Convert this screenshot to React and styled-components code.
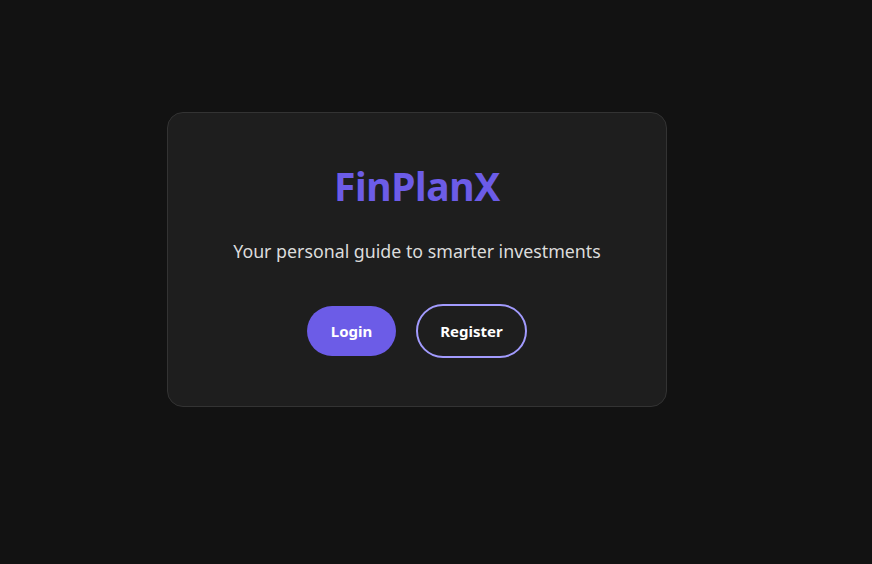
import React from "react";
import styled, { createGlobalStyle } from "styled-components";

const Global = createGlobalStyle`
  html, body { margin: 0; padding: 0; background: #121212; }
  body { font-family: "Noto Sans", "Open Sans", sans-serif; color: #e0e0e0; }
`;

const Page = styled.div`
  min-height: 564px;
  box-sizing: border-box;
  padding: 112px 0 0 167px;
  display: flex;
  align-items: flex-start;
`;

const Card = styled.div`
  width: 500px;
  height: 295px;
  box-sizing: border-box;
  background: #1e1e1e;
  border: 1px solid #333;
  border-radius: 16px;
  padding: 50px 40px 48px;
  display: flex;
  flex-direction: column;
  align-items: center;
`;

const Title = styled.h1`
  margin: 0;
  font-size: 39px;
  font-weight: 700;
  color: #6c5ce7;
  line-height: 1.2;
  letter-spacing: -0.4px;
`;

const Subtitle = styled.p`
  margin: 29px 0 0;
  font-size: 17.8px;
  color: #dcdcdc;
  line-height: 1.4;
`;

const Actions = styled.div`
  margin-top: 40px;
  display: flex;
  align-items: center;
  gap: 20px;
`;

const Button = styled.button`
  font-family: inherit;
  font-size: 15px;
  font-weight: 700;
  color: #fff;
  border-radius: 999px;
  cursor: pointer;
  box-sizing: border-box;
  height: ${(p) => (p.$outline ? "54px" : "50px")};
  width: ${(p) => (p.$outline ? "111px" : "89px")};
  padding: 0;
  background: ${(p) => (p.$outline ? "transparent" : "#6c5ce7")};
  border: ${(p) => (p.$outline ? "2px solid #a29bfe" : "none")};
`;

export default function App() {
  return (
    <>
      <Global />
      <Page>
        <Card>
          <Title>FinPlanX</Title>
          <Subtitle>Your personal guide to smarter investments</Subtitle>
          <Actions>
            <Button>Login</Button>
            <Button $outline>Register</Button>
          </Actions>
        </Card>
      </Page>
    </>
  );
}
